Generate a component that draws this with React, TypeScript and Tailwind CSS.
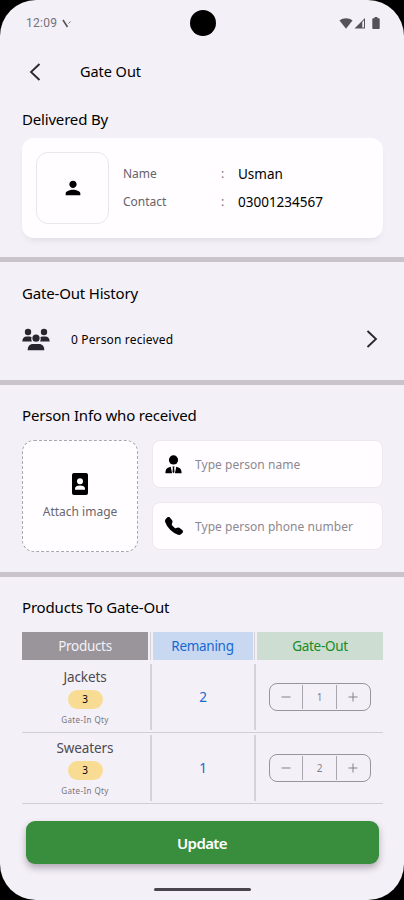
import { useState } from "react";
import { BsTelephoneFill } from "react-icons/bs";
import { MdPerson } from "react-icons/md";

const products = [
  { name: "Jackets", qty: 3, remaining: 2, out: 1 },
  { name: "Sweaters", qty: 3, remaining: 1, out: 2 },
];

const GroupIcon = () => (
  <svg className="w-[28px] h-[23px] shrink-0" viewBox="0 0 28 23" fill="#29252e">
    <circle cx="6" cy="4" r="3.2" />
    <circle cx="22" cy="4" r="3.2" />
    <path d="M.3 13.5C.5 10.300 2 8.500 4.700 8.500h2.800c1 0 1.700.2 2.100.7-.6 1.600-.3 3 .3 4.300z" />
    <path d="M27.700 13.500c-.2-3.200-1.700-5-4.400-5h-2.800c-1 0-1.700.2-2.100.7.6 1.600.3 3-.3 4.300z" />
    <circle cx="14" cy="10.200" r="3.600" />
    <path d="M5.700 22.300c0-4.200 2-6.300 5.300-6.300h6c3.300 0 5.300 2.100 5.300 6.300z" />
  </svg>
);

const TieIcon = () => (
  <svg className="w-[17px] h-[19px] shrink-0" viewBox="0 0 17 19" fill="black">
    <circle cx="8.500" cy="4.900" r="4.600" />
    <path d="M.4 18.200c0-3.700 1.300-5.500 3.800-6l1.500-.4 1.400 6.400z" />
    <path d="M16.600 18.200c0-3.700-1.300-5.500-3.800-6l-1.500-.4-1.400 6.400z" />
    <path d="M7.400 11.400h2.200l-.5 1.600.4 4.100-1 1.100-1-1.100.4-4.100z" />
  </svg>
);

const BadgeIcon = () => (
  <svg className="w-[16px] h-[22px]" viewBox="0 0 16 22">
    <rect width="16" height="22" rx="2" fill="black" />
    <circle cx="8" cy="8.300" r="3" fill="white" />
    <path d="M3 16.800v-1.500c0-1.700 2.300-2.800 5-2.800s5 1.100 5 2.800v1.500z" fill="white" />
  </svg>
);

const StatusBar = () => (
  <div className="h-[46px] shrink-0 pl-[26px] pr-[24px] grid grid-cols-[1fr_26px_1fr] items-center text-[#55525a]">
    <div className="flex items-center gap-[5px]">
      <span className="font-[Roboto] text-[12px] tracking-[0.3px] text-[#75727a]">12:09</span>
      <svg className="w-[10px] h-[11px]" viewBox="0 0 10 11" fill="none" stroke="currentColor">
        <path d="M1 2l4.500 7" strokeWidth="1.600" />
        <path d="M8.500 3.500L6.500 5.500" strokeWidth=".8" />
      </svg>
    </div>
    <div className="size-[26px] rounded-full bg-black" />
    <div className="flex items-center justify-end">
      <svg className="w-[14px] h-[11px]" viewBox="0 0 14 11" fill="currentColor">
        <path d="M.5 2.600C4.200-.4 9.800-.4 13.500 2.600L7 10.800z" />
      </svg>
      <svg className="ml-px w-[12px] h-[12px]" viewBox="0 0 12 12">
        <path d="M.5 11.500L11 1v10.500z" fill="currentColor" />
        <path d="M8.300 5v5.500h1.700V3.300z" fill="#f4f0f7" />
      </svg>
      <svg className="ml-[6px] w-[8px] h-[12px]" viewBox="0 0 8 12" fill="currentColor">
        <path d="M2.500 0h3v1.200H7q.7 0 .7.700v9.400q0 .7-.7.700H1q-.7 0-.7-.7V1.900q0-.7.700-.7h1.500z" />
      </svg>
    </div>
  </div>
);

const Divider = () => <div className="h-[5px] shrink-0 bg-[#c9c4cc]" />;

const SectionTitle = ({ children }: { children: string }) => (
  <h2 className="text-[15px] leading-[22px] tracking-[-0.18px]">{children}</h2>
);

const InfoRow = ({ label, value }: { label: string; value: string }) => (
  <div className="flex h-7 items-center">
    <span className="w-[98px] text-[12px] text-[#66636a]">{label}</span>
    <span className="w-[17px] text-[12px] text-[#77747b]">:</span>
    <span className="text-[13.5px] text-black">{value}</span>
  </div>
);

const Stepper = ({ value, onChange }: { value: number; onChange: (v: number) => void }) => (
  <div className="flex h-[28px] w-[102px] items-stretch rounded-[8px] border border-[#98949b] text-[#858188]">
    <button className="flex flex-1 items-center justify-center" onClick={() => onChange(Math.max(0, value - 1))}>
      <svg className="w-[10px] h-[10px]" viewBox="0 0 10 10" stroke="currentColor">
        <path d="M.5 5h9" />
      </svg>
    </button>
    <span className="my-px flex w-[35px] items-center justify-center border-x border-[#aaa6ad] text-[10px]">{value}</span>
    <button className="flex flex-1 items-center justify-center" onClick={() => onChange(value + 1)}>
      <svg className="w-[10px] h-[10px]" viewBox="0 0 10 10" stroke="currentColor">
        <path d="M.5 5h9M5 .5v9" />
      </svg>
    </button>
  </div>
);

const App = () => {
  const [counts, setCounts] = useState(products.map((p) => p.out));

  const setCount = (index: number, value: number) => {
    setCounts(counts.map((c, i) => (i === index ? value : c)));
  };

  return (
    <div className="h-[900px] w-[404px] overflow-hidden bg-black font-['Noto_Sans','Open_Sans',sans-serif] text-black">
      <div className="flex h-full flex-col overflow-hidden rounded-[36px] bg-[#f4f0f7]">
        <StatusBar />

        <header className="flex h-[51px] shrink-0 items-center pl-[29px]">
          <svg className="w-[12px] h-[18px]" viewBox="0 0 12 18" fill="none" stroke="#29252e" strokeWidth="1.800">
            <path d="M10.500 1L2 9l8.500 8" />
          </svg>
          <h1 className="ml-[39px] text-[14.500px] tracking-[-0.05px]">Gate Out</h1>
        </header>

        <section className="h-[160px] shrink-0 px-[22px] pt-[11px]">
          <div className="h-[30px]">
            <SectionTitle>Delivered By</SectionTitle>
          </div>
          <div className="flex h-[100px] w-[361px] items-center rounded-xl bg-[#fffdff] pl-[14px] shadow-[0_5px_7px_-4px_rgba(90,80,100,0.16)]">
            <div className="flex h-[72px] w-[73px] items-center justify-center rounded-xl border border-[#e9e7ea]">
              <MdPerson className="size-[22px]" />
            </div>
            <div className="ml-[14px]">
              <InfoRow label="Name" value="Usman" />
              <InfoRow label="Contact" value="03001234567" />
            </div>
          </div>
        </section>
        <Divider />

        <section className="h-[118px] shrink-0 px-[22px] pt-[20px]">
          <SectionTitle>Gate-Out History</SectionTitle>
          <div className="mt-[14px] flex h-[42px] items-center">
            <GroupIcon />
            <span className="ml-[21px] pt-[2px] text-[12px] tracking-[0.15px]">0 Person recieved</span>
            <svg className="ml-auto mr-[4px] w-[12px] h-[18px]" viewBox="0 0 12 18" fill="none" stroke="#29252e" strokeWidth="1.800">
              <path d="M1.500 1L10 9l-8.500 8" />
            </svg>
          </div>
        </section>
        <Divider />

        <section className="h-[187px] shrink-0 pl-[22px] pr-[21px] pt-[19px]">
          <SectionTitle>Person Info who received</SectionTitle>
          <div className="mt-[14px] flex gap-[14px]">
            <button className="flex h-[112px] w-[116px] flex-col items-center rounded-xl border border-dashed border-[#aaa6ad] bg-[#fffdff] pt-[32px]">
              <BadgeIcon />
              <span className="mt-[9px] text-[12px] leading-4 text-[#69666d]">Attach image</span>
            </button>
            <div className="flex flex-1 flex-col gap-[14px]">
              <label className="flex h-[48px] items-center rounded-lg border border-[#eee7ee] bg-[#fffdff] pl-[12px]">
                <TieIcon />
                <input className="ml-[13px] w-[170px] pt-[2px] text-[12px] tracking-[0.04px] placeholder:text-[#8c8990] outline-none" placeholder="Type person name" />
              </label>
              <label className="flex h-[48px] items-center rounded-lg border border-[#eee7ee] bg-[#fffdff] pl-[12px]">
                <BsTelephoneFill className="size-[18px] shrink-0" />
                <input className="ml-[12px] w-[170px] pt-[2px] text-[12px] tracking-[0.04px] placeholder:text-[#8c8990] outline-none" placeholder="Type person phone number" />
              </label>
            </div>
          </div>
        </section>
        <Divider />

        <section className="h-[244px] shrink-0 pl-[22px] pr-[21px] pt-[19px]">
          <SectionTitle>Products To Gate-Out</SectionTitle>
          <div className="mt-[14px] grid h-[28px] grid-cols-[126px_1px_100px_1px_126px] justify-between text-center text-[13.500px] leading-[28px] tracking-[-0.3px]">
            <div className="bg-[#99959b] text-[#f4f0f7]">Products</div>
            <div className="bg-[#d6d1d9]" />
            <div className="bg-[#c8d8f1] text-[#1769d2]">Remaning</div>
            <div className="bg-[#d6d1d9]" />
            <div className="bg-[#cdddd2] text-[#198b24]">Gate-Out</div>
          </div>
          <div className="pt-[2px]">
            {products.map((product, i) => (
              <div key={product.name} className="flex h-[71px] border-b border-[#d2ced5] pt-[2px] pb-[2px]">
                <div className="flex w-[126px] flex-col items-center">
                  <span className="mt-[4px] text-[13.500px] leading-[18px] tracking-[-0.1px] text-[#4d4a51]">{product.name}</span>
                  <span className="mt-[4px] flex h-[19px] w-[35px] items-center justify-center rounded-full bg-[#f9dc93] text-[10px]">
                    {product.qty}
                  </span>
                  <span className="mt-[5px] text-[8px] leading-[12px] tracking-[0.4px] text-[#77747b]">Gate-In Qty</span>
                </div>
                <div className="ml-[2px] flex w-[106px] items-center justify-center border-x-2 border-[#d6d2d9] text-[13.500px] text-[#1769d2]">
                  {product.remaining}
                </div>
                <div className="flex flex-1 items-center justify-center">
                  <Stepper value={counts[i]} onChange={(v) => setCount(i, v)} />
                </div>
              </div>
            ))}
          </div>
        </section>

        <footer className="flex flex-1 flex-col items-center">
          <button className="h-[43px] w-[353px] rounded-[9px] bg-[#388e3c] pt-px text-[15px] font-semibold tracking-[-0.6px] text-white shadow-[0_4px_7px_rgba(80,65,85,0.4)]">
            Update
          </button>
          <div className="mt-[24px] h-[3px] w-[97px] rounded-full bg-[#49444d]" />
        </footer>
      </div>
    </div>
  );
};

export default App;
